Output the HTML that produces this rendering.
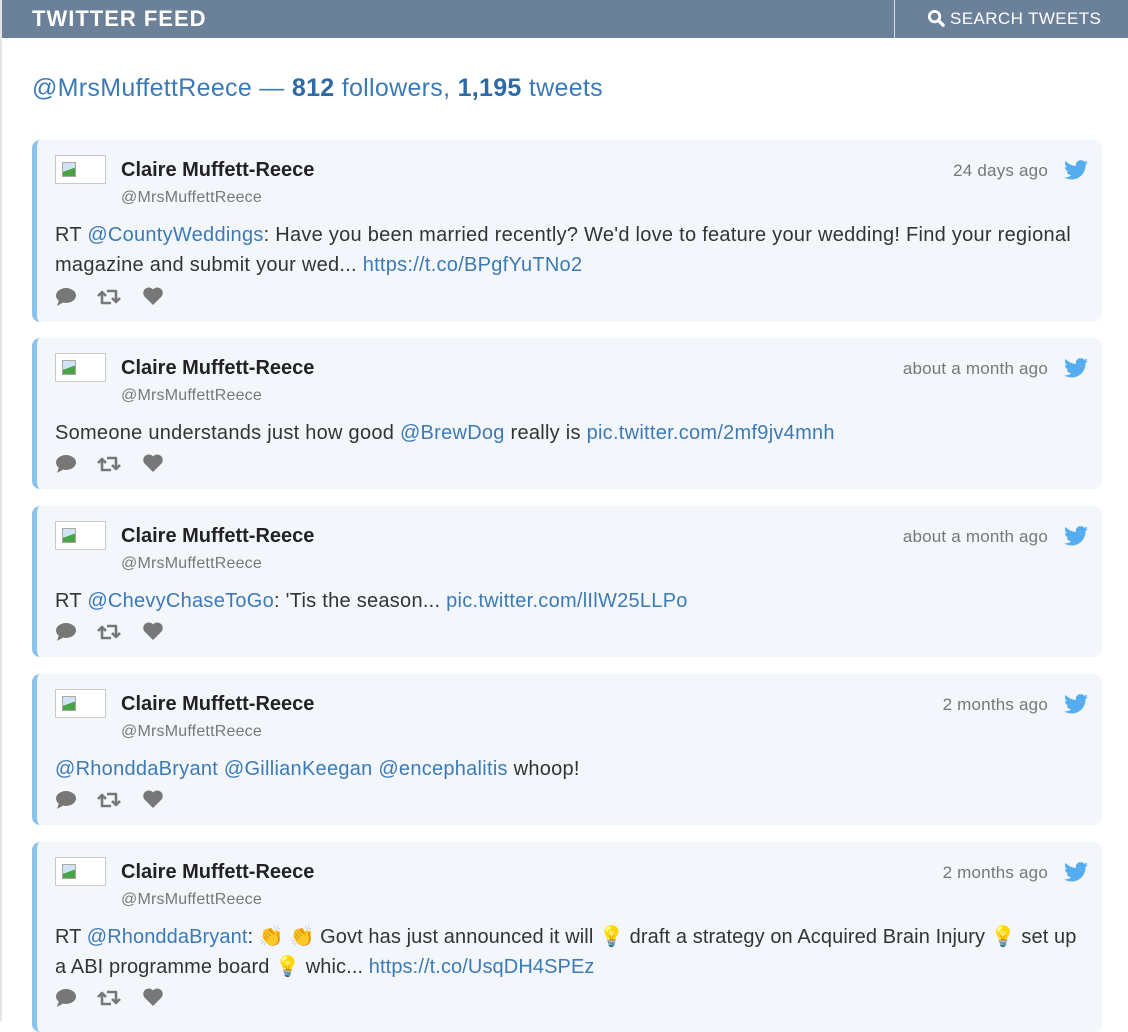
<!DOCTYPE html>
<html><head><meta charset="utf-8"><style>
*{margin:0;padding:0;box-sizing:border-box}
body{width:1128px;height:1021px;overflow:hidden;background:#fff;font-family:"Liberation Sans","Noto Sans CJK JP",sans-serif;position:relative}
.lb{position:absolute;left:0;top:0;width:2px;height:1021px;background:#e4e6ea}
.hdr{position:absolute;left:2px;top:0;width:1126px;height:38px;background:#6b8199;color:#fff}
.hdr .t{position:absolute;left:30px;top:6px;font-size:22px;font-weight:bold;letter-spacing:1px}
.hdr .s{position:absolute;left:892px;top:0;height:38px;border-left:1px solid #d5dde6;width:234px}
.hdr .s span{position:absolute;left:55px;top:9px;font-size:17px;letter-spacing:.4px}
.hdr .s svg{position:absolute;left:32px;top:9px}
.sum{position:absolute;left:32px;top:74px;font-size:25px;color:#3d7ab5;letter-spacing:.3px}
.sum b{color:#2e6aa3}
.card{position:absolute;left:32px;width:1070px;background:#f3f7fc;border-left:5px solid #8cc2ec;border-radius:8px}
.av{position:absolute;left:18px;top:15px;width:51px;height:29px;border:1px solid #c9c9c9;background:#fff}
.av i{position:absolute;left:6px;top:6px;width:14px;height:15px;background:linear-gradient(160deg,#cfe3f5 50%,#49a244 52%);border:1px solid #aaa}
.nm{position:absolute;left:84px;top:15px;line-height:30px;font-size:20px;font-weight:bold;color:#222}
.hd{position:absolute;left:84px;top:48px;line-height:20px;font-size:16px;color:#777;letter-spacing:.2px}
.tm{position:absolute;right:54px;top:16px;line-height:30px;font-size:17px;color:#777;letter-spacing:.2px}
.bd{position:absolute;right:14px;top:20px}
.tx{position:absolute;left:18px;top:80px;right:12px;font-size:20px;line-height:30px;color:#333;letter-spacing:.27px}
.tx a{color:#3d7ab5;text-decoration:none}
.ic{position:absolute;left:18px;height:24px}
.ic svg{position:absolute;top:0}
</style></head><body>
<div class="lb"></div>
<div class="hdr"><div class="t">TWITTER FEED</div>
<div class="s"><svg width="19" height="19" viewBox="0 0 20 20"><circle cx="8" cy="8" r="5.5" fill="none" stroke="#fff" stroke-width="3"/><path d="M12 12l5 5" stroke="#fff" stroke-width="3.5" stroke-linecap="round"/></svg><span>SEARCH TWEETS</span></div></div>
<div class="sum">@MrsMuffettReece — <b>812</b> followers, <b>1,195</b> tweets</div>

<div class="card" style="top:140px;height:182px">
<div class="av"><i></i></div><div class="nm">Claire Muffett-Reece</div><div class="hd">@MrsMuffettReece</div>
<div class="tm">24 days ago</div>
<svg class="bd" width="24" height="20" viewBox="0 0 24 20"><path d="M24 2.4c-.9.4-1.8.7-2.8.8 1-.6 1.8-1.6 2.2-2.7-1 .6-2 1-3.1 1.2A4.9 4.9 0 0 0 11.9 6C7.8 5.8 4.2 3.9 1.7.9a4.9 4.9 0 0 0 1.5 6.6c-.8 0-1.6-.3-2.2-.6 0 2.4 1.7 4.4 3.9 4.8-.7.2-1.5.2-2.2.1.6 2 2.4 3.4 4.6 3.4A9.9 9.9 0 0 1 0 17.3 14 14 0 0 0 7.5 19.5c9.1 0 14-7.5 14-14v-.6c1-.7 1.8-1.6 2.5-2.5z" fill="#55acee"/></svg>
<div class="tx">RT <a>@CountyWeddings</a>: Have you been married recently? We'd love to feature your wedding! Find your regional magazine and submit your wed... <a>https://t.co/BPgfYuTNo2</a></div>
<div class="ic" style="top:146px"></div>
</div>

<div class="card" style="top:338px;height:151px">
<div class="av"><i></i></div><div class="nm">Claire Muffett-Reece</div><div class="hd">@MrsMuffettReece</div>
<div class="tm">about a month ago</div>
<svg class="bd" width="24" height="20" viewBox="0 0 24 20"><path d="M24 2.4c-.9.4-1.8.7-2.8.8 1-.6 1.8-1.6 2.2-2.7-1 .6-2 1-3.1 1.2A4.9 4.9 0 0 0 11.9 6C7.8 5.8 4.2 3.9 1.7.9a4.9 4.9 0 0 0 1.5 6.6c-.8 0-1.6-.3-2.2-.6 0 2.4 1.7 4.4 3.9 4.8-.7.2-1.5.2-2.2.1.6 2 2.4 3.4 4.6 3.4A9.9 9.9 0 0 1 0 17.3 14 14 0 0 0 7.5 19.5c9.1 0 14-7.5 14-14v-.6c1-.7 1.8-1.6 2.5-2.5z" fill="#55acee"/></svg>
<div class="tx">Someone understands just how good <a>@BrewDog</a> really is <a>pic.twitter.com/2mf9jv4mnh</a></div>
<div class="ic" style="top:115px"></div>
</div>

<div class="card" style="top:506px;height:151px">
<div class="av"><i></i></div><div class="nm">Claire Muffett-Reece</div><div class="hd">@MrsMuffettReece</div>
<div class="tm">about a month ago</div>
<svg class="bd" width="24" height="20" viewBox="0 0 24 20"><path d="M24 2.4c-.9.4-1.8.7-2.8.8 1-.6 1.8-1.6 2.2-2.7-1 .6-2 1-3.1 1.2A4.9 4.9 0 0 0 11.9 6C7.8 5.8 4.2 3.9 1.7.9a4.9 4.9 0 0 0 1.5 6.6c-.8 0-1.6-.3-2.2-.6 0 2.4 1.7 4.4 3.9 4.8-.7.2-1.5.2-2.2.1.6 2 2.4 3.4 4.6 3.4A9.9 9.9 0 0 1 0 17.3 14 14 0 0 0 7.5 19.5c9.1 0 14-7.5 14-14v-.6c1-.7 1.8-1.6 2.5-2.5z" fill="#55acee"/></svg>
<div class="tx">RT <a>@ChevyChaseToGo</a>: 'Tis the season... <a>pic.twitter.com/lIlW25LLPo</a></div>
<div class="ic" style="top:115px"></div>
</div>

<div class="card" style="top:674px;height:151px">
<div class="av"><i></i></div><div class="nm">Claire Muffett-Reece</div><div class="hd">@MrsMuffettReece</div>
<div class="tm">2 months ago</div>
<svg class="bd" width="24" height="20" viewBox="0 0 24 20"><path d="M24 2.4c-.9.4-1.8.7-2.8.8 1-.6 1.8-1.6 2.2-2.7-1 .6-2 1-3.1 1.2A4.9 4.9 0 0 0 11.9 6C7.8 5.8 4.2 3.9 1.7.9a4.9 4.9 0 0 0 1.5 6.6c-.8 0-1.6-.3-2.2-.6 0 2.4 1.7 4.4 3.9 4.8-.7.2-1.5.2-2.2.1.6 2 2.4 3.4 4.6 3.4A9.9 9.9 0 0 1 0 17.3 14 14 0 0 0 7.5 19.5c9.1 0 14-7.5 14-14v-.6c1-.7 1.8-1.6 2.5-2.5z" fill="#55acee"/></svg>
<div class="tx"><a>@RhonddaBryant</a> <a>@GillianKeegan</a> <a>@encephalitis</a> whoop!</div>
<div class="ic" style="top:115px"></div>
</div>

<div class="card" style="top:842px;height:190px">
<div class="av"><i></i></div><div class="nm">Claire Muffett-Reece</div><div class="hd">@MrsMuffettReece</div>
<div class="tm">2 months ago</div>
<svg class="bd" width="24" height="20" viewBox="0 0 24 20"><path d="M24 2.4c-.9.4-1.8.7-2.8.8 1-.6 1.8-1.6 2.2-2.7-1 .6-2 1-3.1 1.2A4.9 4.9 0 0 0 11.9 6C7.8 5.8 4.2 3.9 1.7.9a4.9 4.9 0 0 0 1.5 6.6c-.8 0-1.6-.3-2.2-.6 0 2.4 1.7 4.4 3.9 4.8-.7.2-1.5.2-2.2.1.6 2 2.4 3.4 4.6 3.4A9.9 9.9 0 0 1 0 17.3 14 14 0 0 0 7.5 19.5c9.1 0 14-7.5 14-14v-.6c1-.7 1.8-1.6 2.5-2.5z" fill="#55acee"/></svg>
<div class="tx" style="white-space:nowrap;letter-spacing:.1px">RT <a>@RhonddaBryant</a>: 👏 👏 Govt has just announced it will 💡 draft a strategy on Acquired Brain Injury 💡 set up<br>a ABI programme board 💡 whic... <a>https://t.co/UsqDH4SPEz</a></div>
<div class="ic" style="top:145px"></div>
</div>

<script>
var ic='<svg style="left:0" width="22" height="22" viewBox="0 0 22 22"><ellipse cx="11" cy="9.5" rx="10" ry="7.5" fill="#777"/><path d="M4 14l-2 6 7-4z" fill="#777"/></svg>'+
'<svg style="left:40px" width="28" height="22" viewBox="0 0 28 22"><path d="M7 6V17H16M3 10l4-4 4 4M12 5H21V16M17 12l4 4 4-4" fill="none" stroke="#777" stroke-width="2.6" stroke-linejoin="round"/></svg>'+
'<svg style="left:87px" width="22" height="20" viewBox="0 0 22 20"><path d="M11 19L2.5 10.5A5.5 5.5 0 0 1 11 3.5a5.5 5.5 0 0 1 8.5 7z" fill="#777"/></svg>';
document.querySelectorAll('.ic').forEach(function(e){e.innerHTML=ic});
</script>
</body></html>
